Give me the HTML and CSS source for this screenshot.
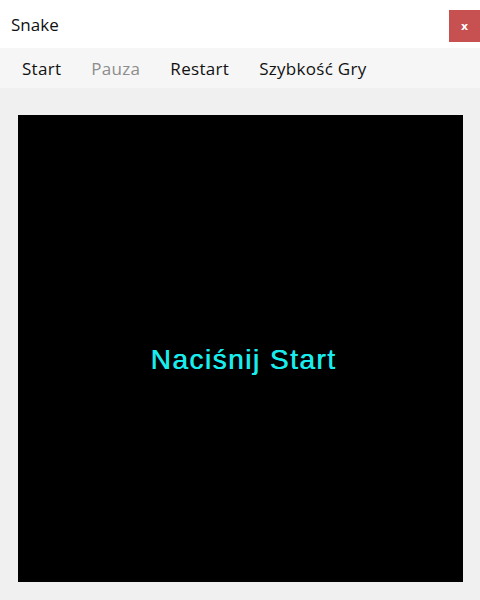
FILE: index.html
```html
<!DOCTYPE html>
<html lang="pl">
<head>
<meta charset="utf-8">
<title>Snake</title>
<link rel="stylesheet" href="styles.css">
</head>
<body>
<div class="window">
  <div class="titlebar">
    <span class="title">Snake</span>
    <div class="close">x</div>
  </div>
  <div class="menubar">
    <span class="menu-item">Start</span>
    <span class="menu-item disabled">Pauza</span>
    <span class="menu-item">Restart</span>
    <span class="menu-item">Szybkość Gry</span>
  </div>
  <div class="content">
    <div class="board">
      <span class="message">Naciśnij Start</span>
    </div>
  </div>
</div>
</body>
</html>
```
FILE: styles.css
```css
html, body {
  margin: 0;
  padding: 0;
  width: 480px;
  height: 600px;
  overflow: hidden;
  background: #f0f0f0;
}

.window {
  width: 480px;
  height: 600px;
  display: flex;
  flex-direction: column;
  font-family: "Open Sans", "Noto Sans", sans-serif;
  font-size: 17px;
  color: #111;
}

.titlebar {
  height: 48px;
  background: #ffffff;
  display: flex;
  align-items: center;
  padding-left: 11px;
}

.title {
  line-height: 23px;
}

.close {
  margin-left: auto;
  align-self: flex-start;
  margin-top: 10px;
  width: 31px;
  height: 32px;
  background: #c75050;
  color: #ffffff;
  font-family: "DejaVu Sans", sans-serif;
  font-size: 11px;
  font-weight: bold;
  display: flex;
  align-items: center;
  justify-content: center;
  line-height: 1;
}

.menubar {
  height: 40px;
  background: #f6f6f6;
  display: flex;
  align-items: center;
  padding-left: 7px;
}

.menu-item {
  padding: 0 15px;
  line-height: 23px;
  letter-spacing: 0.3px;
  color: #111;
}

.menu-item.disabled {
  color: #8d8d8d;
}

.content {
  flex: 1;
  padding: 27px 17px 18px 18px;
  display: flex;
}

.board {
  flex: 1;
  background: #000000;
  display: flex;
  align-items: center;
  justify-content: center;
  padding-top: 22px;
  padding-left: 6px;
}

.message {
  font-family: "Liberation Sans", Arial, sans-serif;
  font-size: 28px;
  letter-spacing: 1.5px;
  color: #19ecec;
  text-shadow: 0.4px 0 0 #19ecec;
}
```
